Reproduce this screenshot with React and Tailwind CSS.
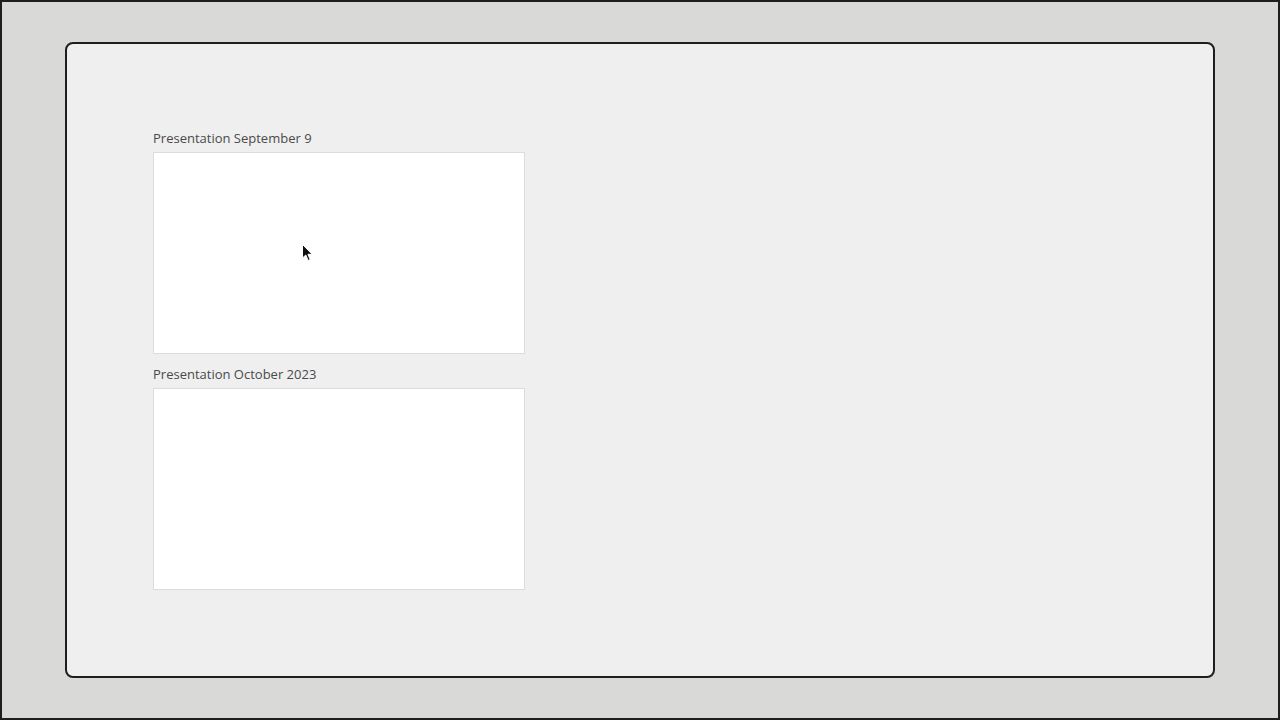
export default function App() {
  const items = ['Presentation September 9', 'Presentation October 2023'];
  return (
    <div className="w-[1280px] h-[720px] border-2 border-[#1e1e1e] bg-[#d9d9d8] pl-[63px] pt-[40px] font-['Open_Sans',sans-serif]">
      <div className="relative w-[1150px] h-[636px] border-2 border-[#1e1e1e] rounded-[8px] bg-[#efefef] pl-[86px] pt-[85px] flex flex-col gap-[11px]">
        {items.map((t) => (
          <div key={t} className="flex flex-col gap-[5px]">
            <div className="text-[13px] leading-[18px] text-[#4a4a4a]">{t}</div>
            <div className="w-[372px] h-[202px] bg-white border border-[#dcdcdc]" />
          </div>
        ))}
        <svg className="absolute left-[234px] top-[199px]" width="14" height="20" viewBox="0 0 14 20">
          <path d="M1.5 1.5 L1.5 15 L4.8 12 L7.2 17.5 L9.2 16.6 L6.9 11.3 L11.2 11.3 Z" fill="#111" stroke="#fff" strokeWidth="1" />
        </svg>
      </div>
    </div>
  );
}
